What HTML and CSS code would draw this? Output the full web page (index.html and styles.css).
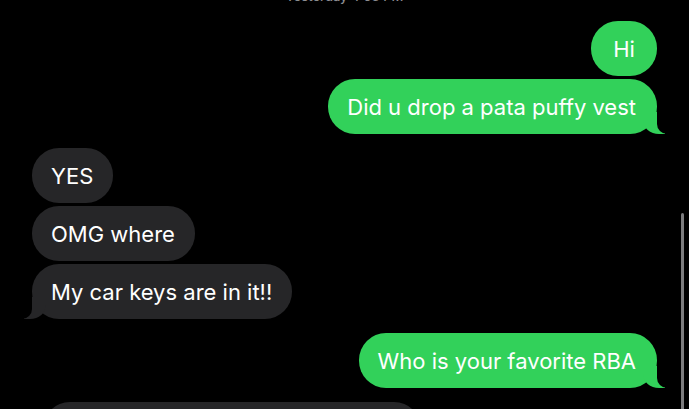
FILE: index.html
```html
<!DOCTYPE html>
<html>
<head>
<meta charset="utf-8">
<link rel="stylesheet" href="styles.css">
</head>
<body>
<div class="screen">
  <div class="stamp">Yesterday 4:53 PM</div>
  <div class="thread">
    <div class="group me">
      <div class="bubble">Hi</div>
      <div class="bubble tail">Did u drop a pata puffy vest</div>
    </div>
    <div class="group them">
      <div class="bubble">YES</div>
      <div class="bubble">OMG where</div>
      <div class="bubble tail">My car keys are in it!!</div>
    </div>
    <div class="group me">
      <div class="bubble tail">Who is your favorite RBA</div>
    </div>
    <div class="group them">
      <div class="bubble wide">&nbsp;</div>
    </div>
  </div>
  <div class="scrollbar"></div>
</div>
</body>
</html>
```

FILE: styles.css
```css
html, body {
  margin: 0;
  padding: 0;
  background: #000;
  overflow: hidden;
}
.screen {
  position: relative;
  width: 689px;
  height: 409px;
  overflow: hidden;
  background: #000;
  font-family: Inter, "Liberation Sans", sans-serif;
}
.stamp {
  text-align: center;
  color: #8e8e93;
  font-size: 13px;
  font-weight: 500;
  line-height: 16px;
  margin-top: -12px;
  height: 16px;
}
.thread {
  display: flex;
  flex-direction: column;
  gap: 14px;
  padding: 17px 32px 0 32px;
}
.group {
  display: flex;
  flex-direction: column;
  gap: 3px;
}
.group.me {
  align-items: flex-end;
}
.group.them {
  align-items: flex-start;
}
.bubble {
  position: relative;
  box-sizing: border-box;
  height: 55px;
  padding: 0 20px 0 19px;
  display: flex;
  align-items: center;
  border-radius: 27px;
  font-size: 22px;
  color: #fff;
  white-space: nowrap;
}
.me .bubble {
  background: #32d15a;
  padding: 0 21px 0 19px;
}
.them .bubble {
  background: #262628;
}
.me .bubble:first-child:not(.tail) {
  min-width: 66px;
  justify-content: center;
  padding: 0;
}
.bubble.tail::before,
.bubble.tail::after {
  content: "";
  position: absolute;
  bottom: 0;
  height: 22px;
}
.me .bubble.tail::before {
  right: -8px;
  width: 22px;
  background: #32d15a;
  border-bottom-left-radius: 16px 14px;
}
.me .bubble.tail::after {
  right: -12px;
  width: 12px;
  background: #000;
  border-bottom-left-radius: 10px;
}
.them .bubble.tail::before {
  left: -8px;
  width: 22px;
  background: #262628;
  border-bottom-right-radius: 16px 14px;
}
.them .bubble.tail::after {
  left: -12px;
  width: 12px;
  background: #000;
  border-bottom-right-radius: 10px;
}
.bubble.wide {
  width: 378px;
  margin-left: 11px;
}
.scrollbar {
  position: absolute;
  right: 5px;
  top: 213px;
  bottom: -10px;
  width: 3px;
  border-radius: 2px;
  background: #7c7c7e;
}
```
